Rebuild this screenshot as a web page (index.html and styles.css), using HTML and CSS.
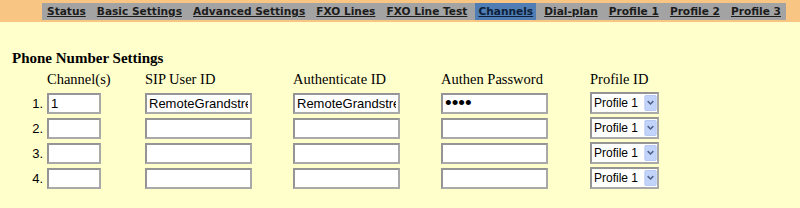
FILE: index.html
```html
<!DOCTYPE html>
<html lang="en">
<head>
    <meta charset="UTF-8">
    <title>Channels</title>
    <link rel="stylesheet" href="styles.css">
</head>
<body>
    <!-- Верхнее меню -->
    <div class="topbar">
        <nav class="menu">
            <a href="#">Status</a>
            <a href="#">Basic Settings</a>
            <a href="#">Advanced Settings</a>
            <a href="#">FXO Lines</a>
            <a href="#">FXO Line Test</a>
            <a href="#" class="active">Channels</a>
            <a href="#">Dial-plan</a>
            <a href="#">Profile 1</a>
            <a href="#">Profile 2</a>
            <a href="#">Profile 3</a>
        </nav>
    </div>

    <div class="content">
        <h3>Phone Number Settings</h3>

        <div class="grid">
            <span></span>
            <span class="head">Channel(s)</span>
            <span class="head">SIP User ID</span>
            <span class="head">Authenticate ID</span>
            <span class="head">Authen Password</span>
            <span class="head">Profile ID</span>

            <span class="num">1.</span>
            <input class="ch" type="text" value="1">
            <input class="txt" type="text" value="RemoteGrandstream">
            <input class="txt" type="text" value="RemoteGrandstream">
            <input class="txt" type="password" value="1234">
            <span class="sel"><select><option>Profile 1</option></select><svg class="arrow" viewBox="0 0 13 17"><rect x="0.5" y="0.5" width="12" height="16" rx="1" fill="#c3d4fb" stroke="#b2c6f2"/><path d="M3.5 6.5 L6.5 9.5 L9.5 6.5" fill="none" stroke="#4d6185" stroke-width="1.6"/></svg></span>

            <span class="num">2.</span>
            <input class="ch" type="text">
            <input class="txt" type="text">
            <input class="txt" type="text">
            <input class="txt" type="password">
            <span class="sel"><select><option>Profile 1</option></select><svg class="arrow" viewBox="0 0 13 17"><rect x="0.5" y="0.5" width="12" height="16" rx="1" fill="#c3d4fb" stroke="#b2c6f2"/><path d="M3.5 6.5 L6.5 9.5 L9.5 6.5" fill="none" stroke="#4d6185" stroke-width="1.6"/></svg></span>

            <span class="num">3.</span>
            <input class="ch" type="text">
            <input class="txt" type="text">
            <input class="txt" type="text">
            <input class="txt" type="password">
            <span class="sel"><select><option>Profile 1</option></select><svg class="arrow" viewBox="0 0 13 17"><rect x="0.5" y="0.5" width="12" height="16" rx="1" fill="#c3d4fb" stroke="#b2c6f2"/><path d="M3.5 6.5 L6.5 9.5 L9.5 6.5" fill="none" stroke="#4d6185" stroke-width="1.6"/></svg></span>

            <span class="num">4.</span>
            <input class="ch" type="text">
            <input class="txt" type="text">
            <input class="txt" type="text">
            <input class="txt" type="password">
            <span class="sel"><select><option>Profile 1</option></select><svg class="arrow" viewBox="0 0 13 17"><rect x="0.5" y="0.5" width="12" height="16" rx="1" fill="#c3d4fb" stroke="#b2c6f2"/><path d="M3.5 6.5 L6.5 9.5 L9.5 6.5" fill="none" stroke="#4d6185" stroke-width="1.6"/></svg></span>
        </div>
    </div>
</body>
</html>
```

FILE: styles.css
```css
/* Общий фон */
body {
    margin: 0;
    background: #ffffcc;
    font-family: "Liberation Serif", serif;
    color: #000;
}

/* Верхняя полоса */
.topbar {
    background: #f9c583;
    height: 22px;
    display: flex;
    justify-content: flex-end;
    padding: 3px 14px 0 0;
    box-sizing: border-box;
}

.menu {
    width: 744px;
    height: 17px;
    background: #a3a3a3;
    display: flex;
    justify-content: space-between;
    align-items: center;
    padding: 0 2px;
    box-sizing: border-box;
}

.menu a {
    font-family: "DejaVu Sans", Verdana, sans-serif;
    font-size: 10.6px;
    font-weight: bold;
    color: #1c1c1c;
    text-decoration: underline;
    padding: 0 3px;
    line-height: 17px;
}

.menu a.active {
    background: #4f7db4;
    color: #0d1f3a;
}

/* Основная часть */
.content {
    padding: 26px 0 0 12px;
}

.content h3 {
    margin: 0 0 2px 0;
    font-size: 15px;
    line-height: 20px;
    font-weight: bold;
}

.grid {
    display: grid;
    grid-template-columns: 35px 98px 148px 148px 149px auto;
    row-gap: 3px;
    align-items: center;
}

.head {
    font-size: 14.5px;
    line-height: 18px;
    padding-bottom: 1px;
}

.num {
    font-family: "Liberation Sans", Arial, sans-serif;
    font-size: 13px;
    text-align: right;
    padding-right: 4px;
}

input, select {
    font-family: "Liberation Sans", Arial, sans-serif;
    font-size: 13px;
    height: 21px;
    box-sizing: border-box;
    border: 2px solid #a9a9a9;
    border-top-color: #959595;
    border-left-color: #959595;
    background: #fff;
    padding: 0 2px;
    margin: 0;
    color: #000;
}

input.ch {
    width: 54px;
}

input.txt {
    width: 107px;
}

input[type=password] {
    font-size: 19px;
    letter-spacing: 0;
    padding-top: 0;
}

/* Выпадающий список */
.sel {
    position: relative;
    display: inline-block;
    width: 69px;
    height: 22px;
}

.sel select {
    appearance: none;
    -webkit-appearance: none;
    width: 69px;
    height: 22px;
    padding-left: 2px;
    font-size: 12px;
}

.sel .arrow {
    position: absolute;
    right: 2px;
    top: 3px;
    width: 13px;
    height: 16px;
}
```
